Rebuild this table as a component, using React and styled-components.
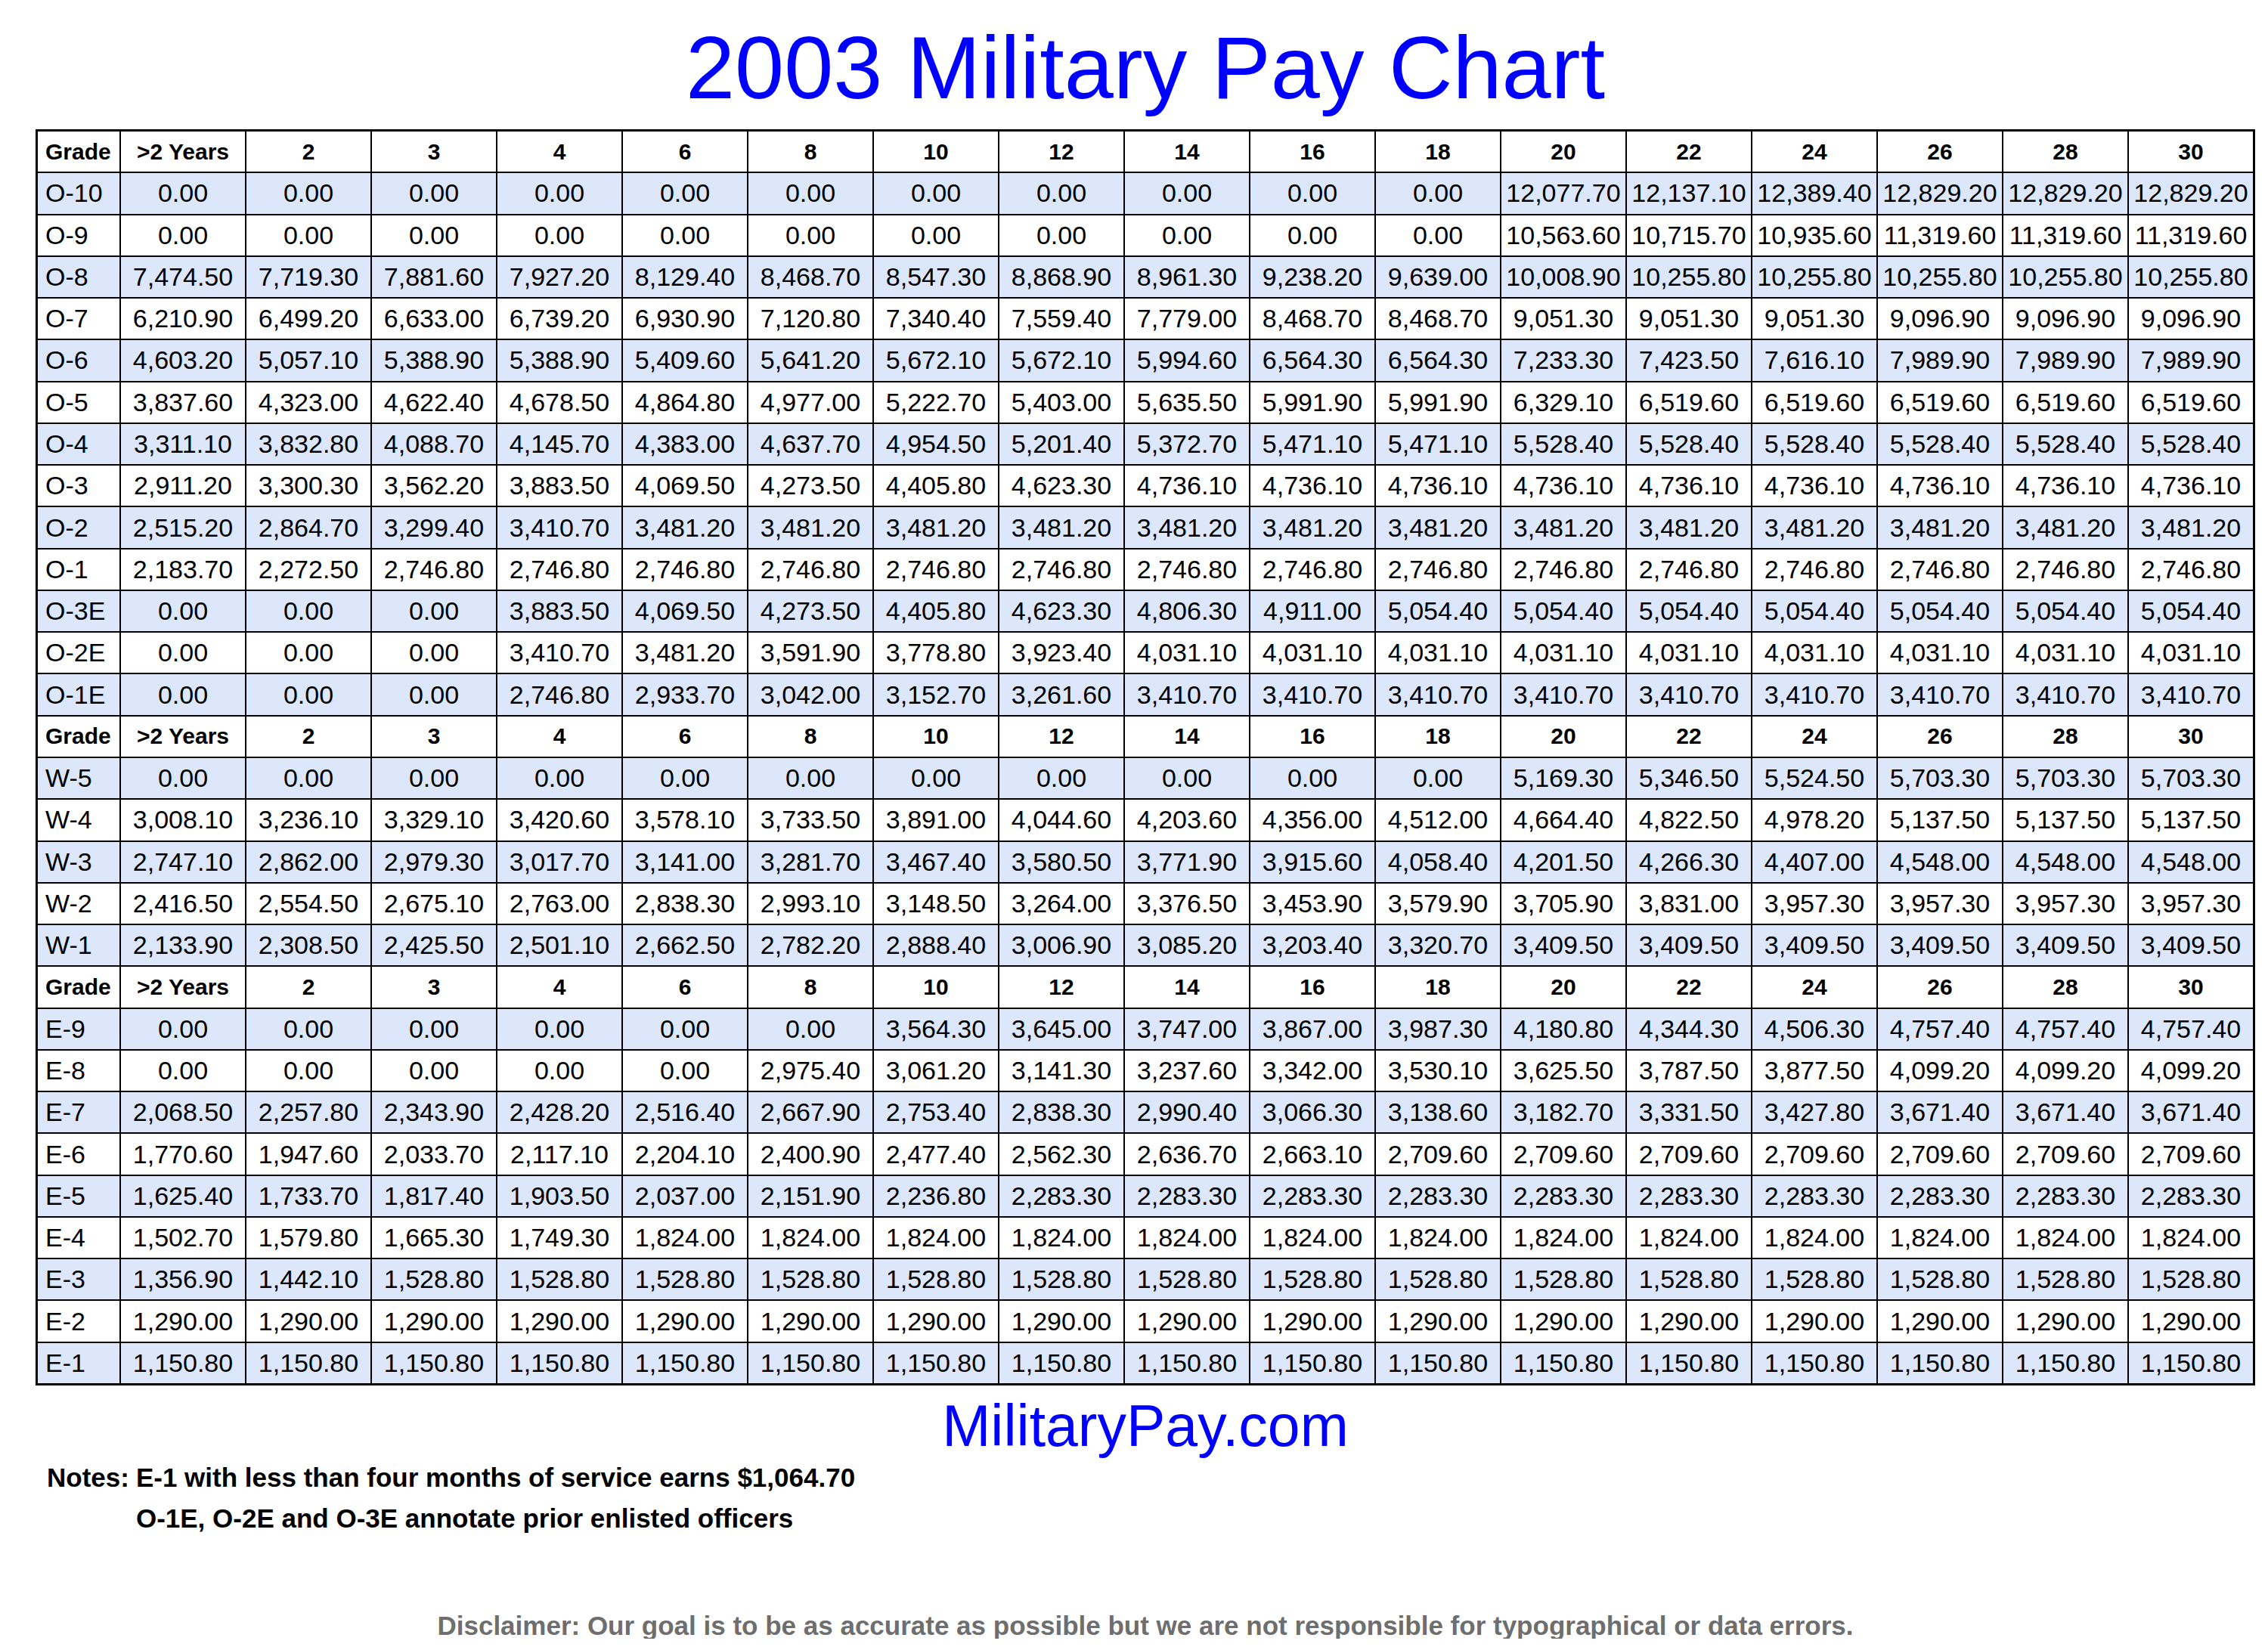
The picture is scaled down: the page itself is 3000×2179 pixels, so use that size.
import React from "react";
import styled, { createGlobalStyle } from "styled-components";

const GlobalStyle = createGlobalStyle`
  html, body {
    margin: 0;
    padding: 0;
    background: #ffffff;
  }
  body {
    font-family: "Liberation Sans", Arial, Helvetica, sans-serif;
    color: #000000;
  }
`;

const Page = styled.div`
  width: 2936px;
  margin-left: 47px;
  padding-top: 31px;
  display: flex;
  flex-direction: column;
`;

const Title = styled.h1`
  margin: 0 0 23px;
  font-size: 117px;
  font-weight: 400;
  line-height: 1;
  color: #0000ff;
  text-align: center;
`;

const Chart = styled.div`
  display: grid;
  grid-template-columns: 108px repeat(17, 164px);
  grid-auto-rows: 53.27px;
  gap: 2px;
  padding: 3px;
  background: #000000;
`;

const Cell = styled.div`
  display: flex;
  align-items: center;
  justify-content: ${(p) => (p.$grade ? "flex-start" : "center")};
  padding-left: ${(p) => (p.$grade ? "10px" : "0")};
  background: ${(p) => (p.$shaded ? "#dce7fb" : "#ffffff")};
  font-size: ${(p) => (p.$head ? "30px" : "34px")};
  font-weight: ${(p) => (p.$head ? 700 : 400)};
  white-space: nowrap;
`;

const Site = styled.div`
  margin-top: 15px;
  font-size: 77px;
  line-height: 1;
  color: #0000ff;
  text-align: center;
`;

const Notes = styled.div`
  margin: 3px 0 0 15px;
  display: grid;
  grid-template-columns: max-content max-content;
  column-gap: 9px;
  font-size: 35px;
  font-weight: 700;
  line-height: 54px;
`;

const NoteLines = styled.div`
  display: flex;
  flex-direction: column;
`;

const Disclaimer = styled.div`
  margin-top: 97px;
  font-size: 35px;
  font-weight: 700;
  line-height: 1;
  color: #6e6e6e;
  text-align: center;
`;

const rep = (v, n) => Array(n).fill(v);
const Z = "0.00";

const HEAD = ["Grade", ">2 Years", "2", "3", "4", "6", "8", "10", "12", "14", "16", "18", "20", "22", "24", "26", "28", "30"];

const sections = [
  [
    ["O-10", ...rep(Z, 11), "12,077.70", "12,137.10", "12,389.40", ...rep("12,829.20", 3)],
    ["O-9", ...rep(Z, 11), "10,563.60", "10,715.70", "10,935.60", ...rep("11,319.60", 3)],
    ["O-8", "7,474.50", "7,719.30", "7,881.60", "7,927.20", "8,129.40", "8,468.70", "8,547.30", "8,868.90", "8,961.30", "9,238.20", "9,639.00", "10,008.90", ...rep("10,255.80", 5)],
    ["O-7", "6,210.90", "6,499.20", "6,633.00", "6,739.20", "6,930.90", "7,120.80", "7,340.40", "7,559.40", "7,779.00", "8,468.70", "8,468.70", "9,051.30", "9,051.30", "9,051.30", ...rep("9,096.90", 3)],
    ["O-6", "4,603.20", "5,057.10", "5,388.90", "5,388.90", "5,409.60", "5,641.20", "5,672.10", "5,672.10", "5,994.60", "6,564.30", "6,564.30", "7,233.30", "7,423.50", "7,616.10", ...rep("7,989.90", 3)],
    ["O-5", "3,837.60", "4,323.00", "4,622.40", "4,678.50", "4,864.80", "4,977.00", "5,222.70", "5,403.00", "5,635.50", "5,991.90", "5,991.90", "6,329.10", ...rep("6,519.60", 5)],
    ["O-4", "3,311.10", "3,832.80", "4,088.70", "4,145.70", "4,383.00", "4,637.70", "4,954.50", "5,201.40", "5,372.70", "5,471.10", "5,471.10", ...rep("5,528.40", 6)],
    ["O-3", "2,911.20", "3,300.30", "3,562.20", "3,883.50", "4,069.50", "4,273.50", "4,405.80", "4,623.30", ...rep("4,736.10", 9)],
    ["O-2", "2,515.20", "2,864.70", "3,299.40", "3,410.70", ...rep("3,481.20", 13)],
    ["O-1", "2,183.70", "2,272.50", ...rep("2,746.80", 15)],
    ["O-3E", Z, Z, Z, "3,883.50", "4,069.50", "4,273.50", "4,405.80", "4,623.30", "4,806.30", "4,911.00", ...rep("5,054.40", 7)],
    ["O-2E", Z, Z, Z, "3,410.70", "3,481.20", "3,591.90", "3,778.80", "3,923.40", ...rep("4,031.10", 9)],
    ["O-1E", Z, Z, Z, "2,746.80", "2,933.70", "3,042.00", "3,152.70", "3,261.60", ...rep("3,410.70", 9)],
  ],
  [
    ["W-5", ...rep(Z, 11), "5,169.30", "5,346.50", "5,524.50", ...rep("5,703.30", 3)],
    ["W-4", "3,008.10", "3,236.10", "3,329.10", "3,420.60", "3,578.10", "3,733.50", "3,891.00", "4,044.60", "4,203.60", "4,356.00", "4,512.00", "4,664.40", "4,822.50", "4,978.20", ...rep("5,137.50", 3)],
    ["W-3", "2,747.10", "2,862.00", "2,979.30", "3,017.70", "3,141.00", "3,281.70", "3,467.40", "3,580.50", "3,771.90", "3,915.60", "4,058.40", "4,201.50", "4,266.30", "4,407.00", ...rep("4,548.00", 3)],
    ["W-2", "2,416.50", "2,554.50", "2,675.10", "2,763.00", "2,838.30", "2,993.10", "3,148.50", "3,264.00", "3,376.50", "3,453.90", "3,579.90", "3,705.90", "3,831.00", ...rep("3,957.30", 4)],
    ["W-1", "2,133.90", "2,308.50", "2,425.50", "2,501.10", "2,662.50", "2,782.20", "2,888.40", "3,006.90", "3,085.20", "3,203.40", "3,320.70", ...rep("3,409.50", 6)],
  ],
  [
    ["E-9", ...rep(Z, 6), "3,564.30", "3,645.00", "3,747.00", "3,867.00", "3,987.30", "4,180.80", "4,344.30", "4,506.30", ...rep("4,757.40", 3)],
    ["E-8", ...rep(Z, 5), "2,975.40", "3,061.20", "3,141.30", "3,237.60", "3,342.00", "3,530.10", "3,625.50", "3,787.50", "3,877.50", ...rep("4,099.20", 3)],
    ["E-7", "2,068.50", "2,257.80", "2,343.90", "2,428.20", "2,516.40", "2,667.90", "2,753.40", "2,838.30", "2,990.40", "3,066.30", "3,138.60", "3,182.70", "3,331.50", "3,427.80", ...rep("3,671.40", 3)],
    ["E-6", "1,770.60", "1,947.60", "2,033.70", "2,117.10", "2,204.10", "2,400.90", "2,477.40", "2,562.30", "2,636.70", "2,663.10", ...rep("2,709.60", 7)],
    ["E-5", "1,625.40", "1,733.70", "1,817.40", "1,903.50", "2,037.00", "2,151.90", "2,236.80", ...rep("2,283.30", 10)],
    ["E-4", "1,502.70", "1,579.80", "1,665.30", "1,749.30", ...rep("1,824.00", 13)],
    ["E-3", "1,356.90", "1,442.10", ...rep("1,528.80", 15)],
    ["E-2", ...rep("1,290.00", 17)],
    ["E-1", ...rep("1,150.80", 17)],
  ],
];

const HeaderRow = () =>
  HEAD.map((h, i) => (
    <Cell key={h} $head $grade={i === 0}>
      {h}
    </Cell>
  ));

const DataRow = ({ row, shaded }) =>
  row.map((v, i) => (
    <Cell key={i} $grade={i === 0} $shaded={shaded}>
      {v}
    </Cell>
  ));

export default function App() {
  return (
    <>
      <GlobalStyle />
      <Page>
        <Title>2003 Military Pay Chart</Title>
        <Chart>
          {sections.map((rows, s) => (
            <React.Fragment key={s}>
              <HeaderRow />
              {rows.map((row, r) => (
                <DataRow key={row[0]} row={row} shaded={r % 2 === 0} />
              ))}
            </React.Fragment>
          ))}
        </Chart>
        <Site>MilitaryPay.com</Site>
        <Notes>
          <span>Notes:</span>
          <NoteLines>
            <span>E-1 with less than four months of service earns $1,064.70</span>
            <span>O-1E, O-2E and O-3E annotate prior enlisted officers</span>
          </NoteLines>
        </Notes>
        <Disclaimer>
          Disclaimer: Our goal is to be as accurate as possible but we are not
          responsible for typographical or data errors.
        </Disclaimer>
      </Page>
    </>
  );
}
